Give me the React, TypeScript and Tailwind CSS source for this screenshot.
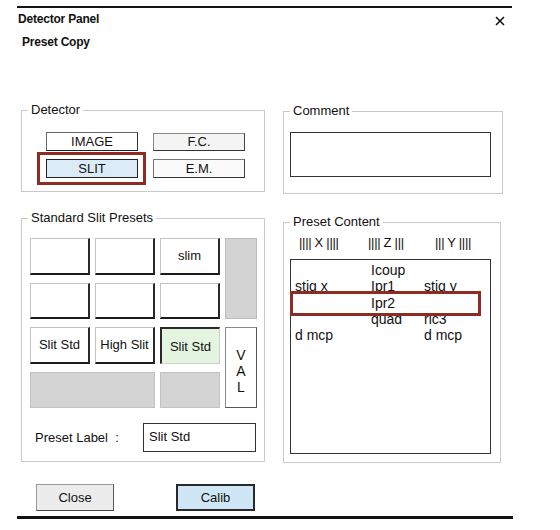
import React from "react";

function Group({
  label,
  className,
  children,
}: {
  label: string;
  className: string;
  children?: React.ReactNode;
}) {
  return (
    <div className={"relative border border-[#c9c9c9] " + className}>
      <div className="absolute -top-[9px] left-[6px] bg-white px-[3px] text-[13px] leading-[16px]">
        {label}
      </div>
      {children}
    </div>
  );
}

const cell =
  "bg-white border border-[#c4c4c4] border-r-[#2a2a2a] border-b-[#1c1c1c] border-b-2 border-r-2 flex items-center justify-center text-[13px]";

export default function App() {
  const rows: [string, string, string][] = [
    ["", "Icoup", ""],
    ["stig x", "Ipr1", "stig y"],
    ["", "Ipr2", ""],
    ["", "quad", "ric3"],
    ["d mcp", "", "d mcp"],
  ];
  return (
    <div className="w-[560px] h-[530px] bg-white text-[#111] font-['Liberation_Sans',Arial,sans-serif] overflow-hidden">
      <div className="ml-[17px] mt-[6px] w-[495px] h-[2px] bg-[#151515]" />
      <div className="ml-[18px] mt-[4px] w-[487px] flex items-center justify-between">
        <span className="text-[12px] leading-[14px] font-bold tracking-[-0.2px]">Detector Panel</span>
        <svg width="10" height="10" viewBox="0 0 10 10" className="mt-[3px]">
          <path d="M1 1 L9 9 M9 1 L1 9" stroke="#111" strokeWidth="1.6" />
        </svg>
      </div>
      <div className="ml-[22px] mt-[9px] text-[12px] leading-[14px] font-bold tracking-[-0.2px]">Preset Copy</div>

      <div className="ml-[21px] mt-[61px] flex items-start gap-[18px]">
        <Group label="Detector" className="w-[244px] h-[82px]">
          <div className="pt-[21px] pl-[24px] grid grid-cols-[92px_92px] grid-rows-[19px_19px] gap-x-[15px] gap-y-[8px] text-[13px]">
            <div className="bg-white border border-[#666] border-b-[#222] border-r-[#333] flex items-center justify-center">IMAGE</div>
            <div className="bg-[#f4f4f4] border border-[#888] border-b-[#333] border-r-[#444] flex items-center justify-center mt-[1px]">F.C.</div>
            <div className="relative bg-[#dcebf8] border border-[#222] flex items-center justify-center">
              SLIT
              <div className="absolute -left-[10px] -right-[9px] -top-[8px] -bottom-[8px] border-[3px] border-[#8d2c22]" />
            </div>
            <div className="bg-[#fbfbfb] border border-[#777] border-b-[#333] border-r-[#444] flex items-center justify-center">E.M.</div>
          </div>
        </Group>
        <Group label="Comment" className="w-[220px] h-[83px] mt-[1px]">
          <div className="ml-[6px] mt-[20px] w-[201px] h-[45px] border border-[#333] bg-white" />
        </Group>
      </div>

      <div className="ml-[21px] mt-[24px] flex items-start gap-[18px]">
        <Group label="Standard Slit Presets" className="w-[244px] h-[244px]">
          <div className="pt-[19px] pl-[8px] grid grid-cols-[60px_60px_60px_32px] grid-rows-[37px_36px_37px_36px] gap-x-[5px] gap-y-[8px]">
            <div className={cell} />
            <div className={cell} />
            <div className={cell}>slim</div>
            <div className="row-span-2 bg-[#d3d3d3] border border-[#bcbcbc]" />
            <div className={cell} />
            <div className={cell} />
            <div className={cell} />
            <div className={cell}>Slit Std</div>
            <div className={cell}>High Slit</div>
            <div className="bg-[#e3f5df] border border-[#cfcfcf] border-t-[#2a2a2a] border-l-[#2a2a2a] border-t-2 border-l-2 flex items-center justify-center text-[13px] pt-[2px]">
              Slit Std
            </div>
            <div className="row-span-2 bg-white border border-[#8a8a8a] border-r-[#555] border-b-[#555] flex flex-col items-center justify-center pt-[6px] text-[14px] leading-[16px]">
              <span>V</span>
              <span>A</span>
              <span>L</span>
            </div>
            <div className="col-span-2 bg-[#d4d4d4] border border-[#c2c2c2]" />
            <div className="bg-[#d4d4d4] border border-[#c2c2c2]" />
          </div>
          <div className="mt-[15px] ml-[13px] flex items-center">
            <span className="w-[108px] text-[13px] whitespace-pre">Preset Label  :</span>
            <div className="w-[113px] h-[29px] border border-[#333] bg-white flex items-center pl-[5px] text-[13px] pb-[2px]">
              Slit Std
            </div>
          </div>
        </Group>
        <Group label="Preset Content" className="w-[218px] h-[241px] mt-[4px]">
          <div className="pt-[11px] pl-[15px] flex text-[13px] leading-[17px] tracking-[-0.3px] whitespace-pre">
            <span className="w-[69px]">|||| X ||||</span>
            <span className="w-[67px]">|||| Z |||</span>
            <span>||| Y ||||</span>
          </div>
          <div className="relative ml-[6px] mt-[8px] w-[201px] h-[195px] border border-[#333] bg-white pt-[2px]">
            <div className="absolute -left-[1px] top-[31px] w-[191px] h-[25px] border-[3px] border-[#8d2c22] bg-white z-10" />
            {rows.map((r, i) => (
              <div
                key={i}
                className={
                  "grid grid-cols-[76px_53px_1fr] pl-[4px] text-[14px] leading-[16.3px] " +
                  (i === 2 ? "relative z-20" : "")
                }
              >
                <span>{r[0]}</span>
                <span>{r[1]}</span>
                <span>{r[2]}</span>
              </div>
            ))}
          </div>
        </Group>
      </div>

      <div className="ml-[36px] mt-[21px] flex gap-[62px] text-[13px]">
        <div className="w-[78px] h-[27px] bg-[#ececec] border border-[#999] border-r-[#555] border-b-[#444] flex items-center justify-center">
          Close
        </div>
        <div className="w-[79px] h-[27px] bg-[#cfe6f7] border-2 border-[#2a2a2a] flex items-center justify-center">
          Calib
        </div>
      </div>
      <div className="ml-[17px] mt-[5px] w-[496px] h-[3px] bg-[#111]" />
    </div>
  );
}
